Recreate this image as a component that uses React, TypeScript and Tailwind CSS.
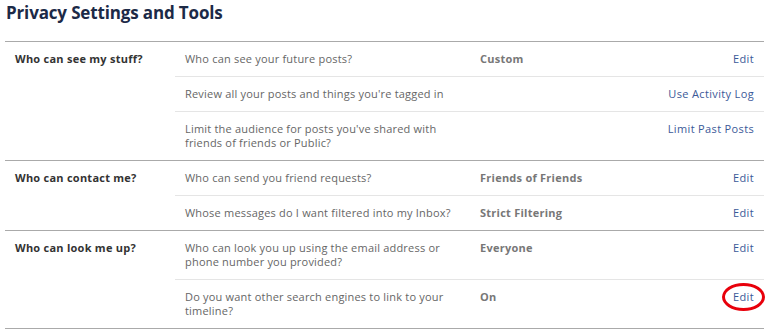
import React from "react";

type Row = { q: string; v?: string; a: string; circle?: boolean };
type Section = { label: string; rows: Row[] };

const sections: Section[] = [
  {
    label: "Who can see my stuff?",
    rows: [
      { q: "Who can see your future posts?", v: "Custom", a: "Edit" },
      { q: "Review all your posts and things you're tagged in", a: "Use Activity Log" },
      { q: "Limit the audience for posts you've shared with friends of friends or Public?", a: "Limit Past Posts" },
    ],
  },
  {
    label: "Who can contact me?",
    rows: [
      { q: "Who can send you friend requests?", v: "Friends of Friends", a: "Edit" },
      { q: "Whose messages do I want filtered into my Inbox?", v: "Strict Filtering", a: "Edit" },
    ],
  },
  {
    label: "Who can look me up?",
    rows: [
      { q: "Who can look you up using the email address or phone number you provided?", v: "Everyone", a: "Edit" },
      { q: "Do you want other search engines to link to your timeline?", v: "On", a: "Edit", circle: true },
    ],
  },
];

export default function App() {
  return (
    <div className="bg-white w-[769px] h-[333px] overflow-hidden" style={{ fontFamily: '"Open Sans", "Noto Sans", sans-serif' }}>
      <div className="ml-[5px] w-[759px]">
        <div className="h-[41px] pt-[2px] pl-[1px]">
          <h1 className="text-[17px] leading-[22px] font-bold tracking-[-0.15px] text-[#1c2a47]">Privacy Settings and Tools</h1>
        </div>
        {sections.map((s, si) => (
          <div key={si} className="flex border-t border-[#aaaaaa]">
            <div className="w-[170px] shrink-0 pl-[10px] py-[10px] text-[11px] leading-[14px] font-bold tracking-[0.25px] text-[#333333]">
              {s.label}
            </div>
            <div className="flex-1">
              {s.rows.map((r, ri) => (
                <div
                  key={ri}
                  className={
                    "flex items-start py-[10px] text-[11px] leading-[14px] tracking-[0.2px] " +
                    (ri > 0 ? "border-t border-[#e5e5e5]" : "")
                  }
                >
                  <div className="w-[305px] shrink-0 pl-[10px] pr-[14px] text-[#666666]">{r.q}</div>
                  <div className="flex-1 font-bold tracking-[0.25px] text-[#777777]">{r.v ?? ""}</div>
                  <div className="pr-[10px] text-[#3b5998] tracking-[0.35px]">
                    <span className="relative">
                      {r.a}
                      {r.circle && (
                        <span className="absolute -left-[11px] -right-[11px] -top-[6px] -bottom-[7px] border-[3px] border-[#e8000b] rounded-[50%]" />
                      )}
                    </span>
                  </div>
                </div>
              ))}
            </div>
          </div>
        ))}
        <div className="border-t border-[#aaaaaa]" />
      </div>
    </div>
  );
}
